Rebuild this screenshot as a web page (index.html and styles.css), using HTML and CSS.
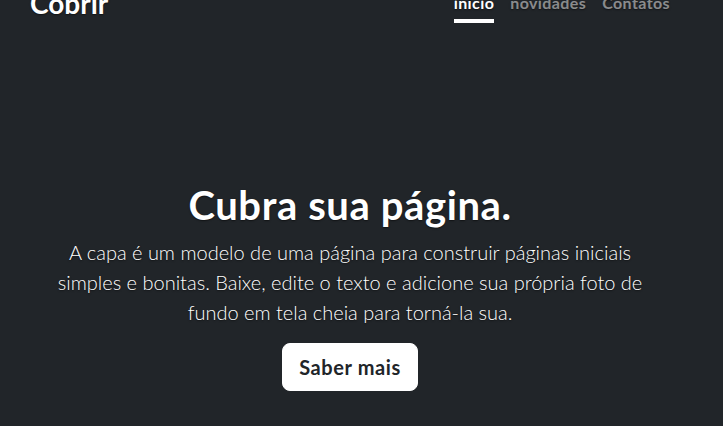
FILE: index.html
```html
<!DOCTYPE html>
<html lang="pt-br">
<head>
<meta charset="utf-8">
<title>Cobrir</title>
<link rel="stylesheet" href="styles.css">
</head>
<body>
<div class="cover">
  <header class="masthead">
    <h3 class="brand">Cobrir</h3>
    <nav class="nav">
      <a class="nav-link active" href="#">início</a>
      <a class="nav-link" href="#">novidades</a>
      <a class="nav-link" href="#">Contatos</a>
    </nav>
  </header>
  <main class="main">
    <h1 class="title">Cubra sua página.</h1>
    <p class="lead">A capa é um modelo de uma página para construir páginas iniciais simples e bonitas. Baixe, edite o texto e adicione sua própria foto de fundo em tela cheia para torná-la sua.</p>
    <p class="cta"><a href="#" class="btn">Saber mais</a></p>
  </main>
</div>
</body>
</html>
```

FILE: styles.css
```css
html, body {
  margin: 0;
  height: 100%;
  overflow: hidden;
}
body {
  background: #212529;
  color: #fff;
  font-family: Lato, "Open Sans", sans-serif;
  text-shadow: 0 0.05rem 0.1rem rgba(0, 0, 0, 0.5);
}
.cover {
  width: 640px;
  margin-left: 14px;
  padding: 0 16px;
  display: flex;
  flex-direction: column;
}
.masthead {
  display: flex;
  justify-content: space-between;
  align-items: flex-start;
  margin-top: -13px;
}
.brand {
  margin: 0;
  font-size: 28px;
  font-weight: 700;
  line-height: 33.6px;
}
.nav {
  display: flex;
  gap: 16px;
}
.nav-link {
  display: block;
  padding: 4px 0;
  font-size: 16px;
  font-weight: 700;
  line-height: 24px;
  letter-spacing: 0.4px;
  color: rgba(255, 255, 255, 0.5);
  text-decoration: none;
  border-bottom: 4px solid transparent;
}
.nav-link.active {
  color: #fff;
  border-bottom-color: #fff;
}
.main {
  padding: 0 16px;
  margin-top: 158px;
  text-align: center;
}
.title {
  margin: 0 0 8px;
  font-size: 40px;
  font-weight: 700;
  line-height: 48px;
  letter-spacing: 0.6px;
}
.lead {
  margin: 0 0 16px;
  font-size: 20px;
  font-weight: 300;
  line-height: 30px;
}
.cta {
  margin: 0;
}
.btn {
  display: inline-block;
  padding: 8px 16px;
  font-size: 20px;
  font-weight: 700;
  line-height: 30px;
  letter-spacing: 0.6px;
  color: #212529;
  background: #fff;
  border: 1px solid #fff;
  border-radius: 8px;
  text-decoration: none;
  text-shadow: none;
}
```
